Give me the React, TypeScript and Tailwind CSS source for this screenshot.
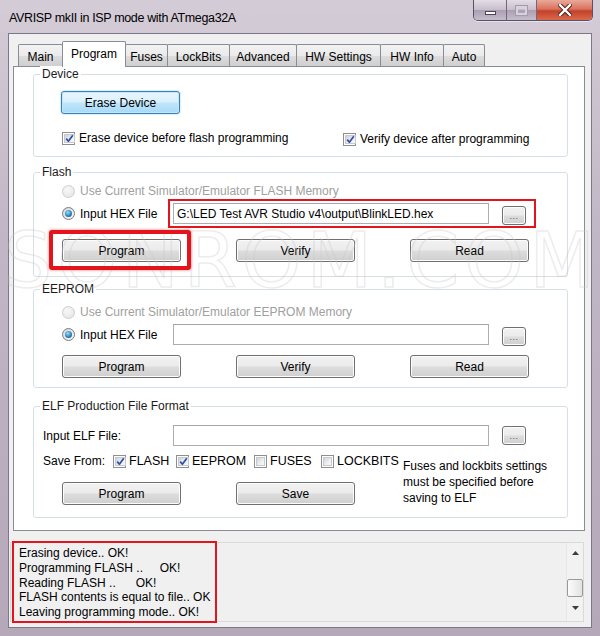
import React from 'react';

const BTN =
  'flex items-center justify-center h-[23px] rounded-[3px] border border-[#707070] bg-[linear-gradient(to_bottom,#f2f2f2_0%,#ebebeb_48%,#dddddd_52%,#cfcfcf_100%)] shadow-[inset_0_0_0_1px_#fcfcfc] text-black';

function Btn({ w, children, primary }: { w: string; children: React.ReactNode; primary?: boolean }) {
  if (primary) {
    return (
      <div className={`${w} flex items-center justify-center h-[23px] rounded-[3px] border border-[#3c7fb1] bg-[linear-gradient(to_bottom,#eaf6fd_0%,#d9f0fc_48%,#bee6fd_52%,#a7d9f5_100%)] shadow-[inset_0_0_0_1px_#c5e6f8,0_0_2px_#7fc4ee] text-black`}>
        {children}
      </div>
    );
  }
  return <div className={`${w} ${BTN}`}>{children}</div>;
}

function Dots() {
  return (
    <div className="w-[24px] h-[19px] rounded-[3px] border border-[#707070] bg-[linear-gradient(to_bottom,#f2f2f2_0%,#ebebeb_48%,#dddddd_52%,#cfcfcf_100%)] shadow-[inset_0_0_0_1px_#fcfcfc] flex items-end justify-center pb-[3px]">
      <span className="text-[9px] leading-[9px] text-[#555] tracking-[0.5px]">...</span>
    </div>
  );
}

function Check({ checked }: { checked?: boolean }) {
  return (
    <span className="w-[13px] h-[13px] shrink-0 border border-[#8e8f8f] bg-white p-px flex">
      <span className="flex-1 flex items-center justify-center border border-[#c6c9cf] bg-[linear-gradient(135deg,#cfd2d8_0%,#eef0f2_60%,#f8f8f8_100%)]">
        {checked && (
          <svg width="9" height="9" viewBox="0 0 9 9">
            <path d="M1.2 4.6 L3.4 7.2 L7.8 1.2" stroke="#2f4fa8" strokeWidth="1.7" fill="none" strokeLinejoin="round" />
          </svg>
        )}
      </span>
    </span>
  );
}

function Radio({ on, disabled }: { on?: boolean; disabled?: boolean }) {
  if (disabled) {
    return (
      <span className="w-[13px] h-[13px] shrink-0 rounded-full border border-[#cfcfcf] bg-[radial-gradient(circle_at_40%_35%,#f8f8f8,#e2e2e2)]" />
    );
  }
  return (
    <span className="w-[13px] h-[13px] shrink-0 rounded-full border border-[#7a7a7a] bg-[linear-gradient(135deg,#d6d6d6,#fbfbfb)] flex items-center justify-center">
      {on && <span className="w-[7px] h-[7px] rounded-full bg-[radial-gradient(circle_at_40%_35%,#9bdcf9_0%,#2b86c3_55%,#114d7d_100%)]" />}
    </span>
  );
}

function Group({ label, h, className, children }: { label: string; h: string; className: string; children: React.ReactNode }) {
  return (
    <div className={`relative ${h} border border-[#d5dfe5] rounded-[3px] ${className}`}>
      <span className="absolute top-[-9px] left-[6px] px-[2px] bg-white leading-[16px] text-[#1b1b1b]">{label}</span>
      {children}
    </div>
  );
}

function Input({ value }: { value?: string }) {
  return (
    <div className="w-[316px] h-[21px] border border-[#abadb3] border-t-[#a2a5ab] bg-white flex items-center pl-[3px] text-black whitespace-nowrap overflow-hidden">
      {value}
    </div>
  );
}

function FileSection({ name, file, pt }: { name: string; file?: string; pt: string }) {
  return (
    <div className={`${pt} pl-[28px]`}>
      <div className="h-[16px] flex items-center gap-[5px] text-[#a0a0a0]">
        <Radio disabled />
        <span>Use Current Simulator/Emulator {name} Memory</span>
      </div>
      <div className="mt-[4px] h-[21px] flex items-center">
        <div className="w-[111px] flex items-center gap-[5px]">
          <Radio on />
          <span>Input HEX File</span>
        </div>
        <Input value={file} />
        <div className="ml-[13px] mt-[3px]">
          <Dots />
        </div>
      </div>
    </div>
  );
}

function ButtonRow({ labels, mt }: { labels: string[]; mt: string }) {
  return (
    <div className={`${mt} flex gap-[55px]`}>
      {labels.map((l) => (
        <Btn key={l} w="w-[119px]">{l}</Btn>
      ))}
    </div>
  );
}

const TABS: [string, string][] = [
  ['Main', 'w-[45px]'],
  ['Program', 'w-[64px]'],
  ['Fuses', 'w-[43px]'],
  ['LockBits', 'w-[63px]'],
  ['Advanced', 'w-[68px]'],
  ['HW Settings', 'w-[85px]'],
  ['HW Info', 'w-[64px]'],
  ['Auto', 'w-[42px]'],
];

function WindowButtons() {
  return (
    <div className="flex h-[21px] rounded-b-[5px] border border-t-0 border-[#58506a] overflow-hidden shadow-[0_1px_0_rgba(255,255,255,0.5)]">
      <div className="w-[33px] flex items-end justify-center pb-[5px] border-r border-[#6f6680] bg-[linear-gradient(to_bottom,#e3dde6_0%,#c7bccb_50%,#ab9fb1_52%,#c6bccb_100%)]">
        <span className="w-[11px] h-[4px] bg-white border border-[#4b4556]" />
      </div>
      <div className="w-[30px] flex items-center justify-center border-r border-[#6f6680] bg-[linear-gradient(to_bottom,#e3dde6_0%,#c7bccb_50%,#ab9fb1_52%,#c6bccb_100%)]">
        <span className="w-[11px] h-[9px] border-[2px] border-t-[3px] border-[#d8d2dc] shadow-[0_0_0_1px_#a59aab]" />
      </div>
      <div className="w-[55px] flex items-center justify-center bg-[linear-gradient(to_bottom,#eaa899_0%,#d9735d_45%,#c3412a_55%,#d86a4c_100%)]">
        <svg width="14" height="12" viewBox="0 0 14 12">
          <path d="M2 1 L12 11 M12 1 L2 11" stroke="#4a1a14" strokeWidth="4.2" strokeLinecap="square" />
          <path d="M2 1 L12 11 M12 1 L2 11" stroke="#ffffff" strokeWidth="2.4" strokeLinecap="square" />
        </svg>
      </div>
    </div>
  );
}

export default function App() {
  return (
    <div className="relative w-[600px] h-[636px] overflow-hidden bg-[linear-gradient(to_bottom,#d4ccd7_0%,#c2b7c6_35%,#b5a8b9_100%)] font-['Liberation_Sans',Arial,sans-serif] text-[12px] leading-[16px] text-black">
      <div className="h-[33px] flex items-start justify-between pl-[9px] pr-[7px]">
        <div className="pt-[10px] text-[12.5px] tracking-[-0.35px] text-black">AVRISP mkII in ISP mode with ATmega32A</div>
        <WindowButtons />
      </div>

      <div className="mx-[8px] h-[595px] bg-[#f0f0f0] border border-[#80768a] flex flex-col">
        <div className="ml-[4px] mt-[7px] w-[572px]">
          <div className="h-[25px] flex items-end pl-[5px]">
            {TABS.map(([t, w], i) =>
              t === 'Program' ? (
                <div key={t} className={`${w} -ml-px relative z-10 h-[26px] -mb-px bg-white border border-b-0 border-[#898c95] rounded-t-[2px] flex items-start justify-center pt-[4px]`}>
                  {t}
                </div>
              ) : (
                <div key={t} className={`${w} ${i === 0 ? '' : '-ml-px'} h-[22px] border border-b-0 border-[#898c95] rounded-t-[2px] bg-[linear-gradient(to_bottom,#f2f2f2_0%,#ebebeb_50%,#dddddd_51%,#cfcfcf_100%)] flex items-center justify-center pt-[2px]`}>
                  {t}
                </div>
              )
            )}
          </div>

          <div className="h-[465px] bg-white border border-[#898c95] pl-[19px] pr-[16px] pt-[7px]">
            <Group label="Device" h="h-[83px]" className="">
              <div className="pt-[16px] pl-[27px]">
                <Btn w="w-[119px]" primary>Erase Device</Btn>
                <div className="mt-[16px] h-[16px] flex items-center pl-px">
                  <div className="w-[281px] flex items-center gap-[4px]">
                    <Check checked />
                    <span>Erase device before flash programming</span>
                  </div>
                  <div className="flex items-center gap-[4px] mt-[2px]">
                    <Check checked />
                    <span>Verify device after programming</span>
                  </div>
                </div>
              </div>
            </Group>

            <Group label="Flash" h="h-[105px]" className="mt-[15px]">
              <FileSection name="FLASH" file="G:\LED Test AVR Studio v4\output\BlinkLED.hex" pt="pt-[10px]" />
              <div className="pl-[28px]">
                <ButtonRow labels={['Program', 'Verify', 'Read']} mt="mt-[15px]" />
              </div>
            </Group>

            <Group label="EEPROM" h="h-[99px]" className="mt-[12px]">
              <FileSection name="EEPROM" pt="pt-[14px]" />
              <div className="pl-[28px]">
                <ButtonRow labels={['Program', 'Verify', 'Read']} mt="mt-[10px]" />
              </div>
            </Group>

            <Group label="ELF Production File Format" h="h-[112px]" className="mt-[18px]">
              <div className="pt-[18px] pl-[9px]">
                <div className="h-[21px] flex items-center">
                  <span className="w-[130px]">Input ELF File:</span>
                  <Input />
                  <div className="ml-[13px]">
                    <Dots />
                  </div>
                </div>
                <div className="mt-[7px] h-[16px] flex items-start">
                  <span className="w-[70px] h-[16px] flex items-center">Save From:</span>
                  {[
                    ['FLASH', true, 'w-[63px]'],
                    ['EEPROM', true, 'w-[78px]'],
                    ['FUSES', false, 'w-[67px]'],
                    ['LOCKBITS', false, 'w-[82px]'],
                  ].map(([l, c, w]) => (
                    <div key={l as string} className={`${w} h-[16px] flex items-center gap-[3px] text-[12.5px]`}>
                      <Check checked={c as boolean} />
                      <span>{l as string}</span>
                    </div>
                  ))}
                  <div className="mt-[5px] h-[16px] whitespace-nowrap">
                    Fuses and lockbits settings
                    <br />
                    must be specified before
                    <br />
                    saving to ELF
                  </div>
                </div>
                <div className="pl-[19px]">
                  <div className="mt-[13px] flex gap-[55px]">
                    <Btn w="w-[119px]">Program</Btn>
                    <Btn w="w-[119px]">Save</Btn>
                  </div>
                </div>
              </div>
            </Group>
          </div>
        </div>

        <div className="mt-[11px] ml-[1px] w-[574px] h-[80px] border border-[#dadada] bg-[#f0f0f0] flex">
          <div className="flex-1 pl-[8px] pt-[3px] leading-[14.75px] whitespace-pre">
            <div>Erasing device.. OK!</div>
            <div>Programming FLASH ..     OK!</div>
            <div>Reading FLASH ..      OK!</div>
            <div>FLASH contents is equal to file.. OK</div>
            <div>Leaving programming mode.. OK!</div>
          </div>
          <div className="w-[17px] border-l border-[#e6e6e6] bg-[#f2f2f2] flex flex-col items-center pt-[8px]">
            <svg width="7" height="4" viewBox="0 0 7 4">
              <path d="M0 4 L3.5 0 L7 4 Z" fill="#3c3c3c" />
            </svg>
            <div className="mt-[24px] w-[16px] h-[18px] rounded-[2px] border border-[#9a9a9a] bg-[linear-gradient(to_right,#fbfbfb,#e3e3e3)]" />
            <svg className="mt-[9px]" width="7" height="4" viewBox="0 0 7 4">
              <path d="M0 0 L7 0 L3.5 4 Z" fill="#3c3c3c" />
            </svg>
          </div>
        </div>
      </div>

      {/* watermark */}
      <div className="pointer-events-none absolute left-[4px] top-[216px] whitespace-nowrap font-['DejaVu_Sans',sans-serif] text-[76px] leading-[90px] tracking-[5px] text-transparent [-webkit-text-stroke:1.5px_rgba(200,200,200,0.35)]">
        SONROM.COM
      </div>

      {/* red annotations */}
      <div className="pointer-events-none absolute left-[168px] top-[199px] w-[368px] h-[29px] border-2 border-[#e3141c]" />
      <div className="pointer-events-none absolute left-[49px] top-[230px] w-[142px] h-[40px] border-[4px] border-[#e3141c] rounded-[3px] shadow-[0_0_3px_#f07070]" />
      <div className="pointer-events-none absolute left-[12px] top-[541px] w-[205px] h-[82px] border-2 border-[#e3141c]" />
    </div>
  );
}
